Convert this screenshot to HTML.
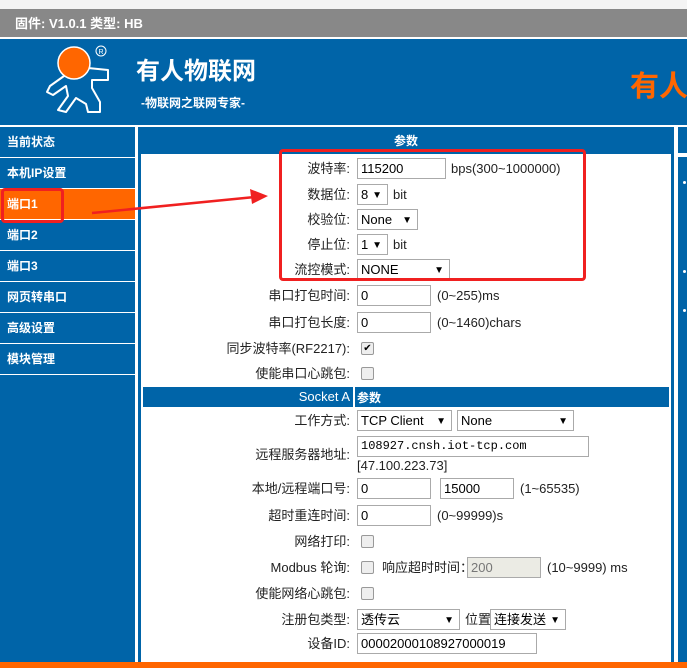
<!DOCTYPE html>
<html><head><meta charset="utf-8"><style>
*{margin:0;padding:0;box-sizing:border-box}
body{width:687px;height:668px;overflow:hidden;background:#fff;font-family:"Liberation Sans","Noto Sans CJK SC",sans-serif;position:relative}
.a{position:absolute}
.side div{position:absolute;left:0;width:135px;height:30px;background:#0064a8;color:#fff;font-size:12px;font-weight:bold;padding:8px 0 0 7px;line-height:14px}
.lbl{position:absolute;right:337px;font-size:13px;line-height:15px;color:#222;text-align:right;white-space:nowrap}
.inp{position:absolute;height:21px;border:1px solid #aaa;background:#fff;font-size:13px;line-height:15px;color:#000;padding:2px 3px;white-space:nowrap}
.sel:after{content:"▼";position:absolute;right:5px;top:3px;font-size:10px}
.t{position:absolute;font-size:13px;line-height:15px;color:#222;white-space:nowrap}
.cb{position:absolute;width:13px;height:13px;border:1px solid #999;border-radius:2px;background:#eee}
</style></head><body>
<div class="a" style="left:0;top:0;width:687px;height:9px;background:#f4f4f4"></div>
<div class="a" style="left:0;top:9px;width:687px;height:28px;background:#888"></div>
<div class="a" style="left:15px;top:16px;color:#fff;font-size:13px;line-height:15px;font-weight:bold">固件: V1.0.1 类型: HB</div>
<div class="a" style="left:0;top:39px;width:687px;height:86px;background:#0064a8"></div>
<svg class="a" style="left:0;top:39px" width="687" height="86">
<path d="M64 37 L50 47 L47 53 L53 56 L66 47 L68 57 L58 71 L66 73 L76 59 L86 65 L88 73 L100 73 L100 63 L92 49 L92 41 L108 41 L108 31 L88 29 Z" fill="none" stroke="#fff" stroke-width="2" stroke-linejoin="round"/>
<circle cx="74" cy="24" r="16" fill="#ff6600" stroke="#fff" stroke-width="1.5"/>
<circle cx="101" cy="12" r="5" fill="none" stroke="#fff" stroke-width="1"/>
<text x="98.5" y="15" fill="#fff" font-size="7" font-family="Liberation Sans">R</text>
</svg>
<div class="a" style="left:136px;top:57px;color:#fff;font-size:24px;line-height:30px;font-weight:bold">有人物联网</div>
<div class="a" style="left:141px;top:96px;color:#fff;font-size:12px;line-height:15px;font-weight:bold">-物联网之联网专家-</div>
<div class="a" style="left:630px;top:70px;color:#ff6600;font-size:29px;line-height:34px;font-weight:bold;white-space:nowrap">有人物</div>
<div class="side">
<div style="top:127px">当前状态</div>
<div style="top:158px">本机IP设置</div>
<div style="top:189px;background:#ff6600">端口1</div>
<div style="top:220px">端口2</div>
<div style="top:251px">端口3</div>
<div style="top:282px">网页转串口</div>
<div style="top:313px">高级设置</div>
<div style="top:344px">模块管理</div>
<div style="top:375px;height:293px"></div>
</div>
<div class="a" style="left:138px;top:127px;width:536px;height:541px;background:#0064a8"></div>
<div class="a" style="left:138px;top:134px;width:536px;text-align:center;color:#fff;font-size:12px;line-height:14px;font-weight:bold">参数</div>
<div class="a" style="left:141px;top:154px;width:530px;height:514px;background:#fff"></div>
<div class="a" style="left:678px;top:127px;width:9px;height:26px;background:#0064a8"></div>
<div class="a" style="left:678px;top:157px;width:9px;height:511px;background:#0064a8"></div>
<div class="a" style="left:683px;top:181px;width:3px;height:3px;background:#fff;border-radius:2px"></div>
<div class="a" style="left:683px;top:270px;width:3px;height:3px;background:#fff;border-radius:2px"></div>
<div class="a" style="left:683px;top:309px;width:3px;height:3px;background:#fff;border-radius:2px"></div>

<div class="lbl" style="top:161px">波特率:</div><div class="inp" style="left:357px;top:158px;width:89px">115200</div><div class="t" style="left:451px;top:161px">bps(300~1000000)</div>
<div class="lbl" style="top:187px">数据位:</div><div class="inp sel" style="left:357px;top:184px;width:31px">8</div><div class="t" style="left:393px;top:187px">bit</div>
<div class="lbl" style="top:212px">校验位:</div><div class="inp sel" style="left:357px;top:209px;width:61px">None</div>
<div class="lbl" style="top:237px">停止位:</div><div class="inp sel" style="left:357px;top:234px;width:31px">1</div><div class="t" style="left:393px;top:237px">bit</div>
<div class="lbl" style="top:262px">流控模式:</div><div class="inp sel" style="left:357px;top:259px;width:93px">NONE</div>
<div class="lbl" style="top:288px">串口打包时间:</div><div class="inp" style="left:357px;top:285px;width:74px">0</div><div class="t" style="left:437px;top:288px">(0~255)ms</div>
<div class="lbl" style="top:315px">串口打包长度:</div><div class="inp" style="left:357px;top:312px;width:74px">0</div><div class="t" style="left:437px;top:315px">(0~1460)chars</div>
<div class="lbl" style="top:341px">同步波特率(RF2217):</div><div class="cb" style="left:361px;top:342px;font-size:10px;line-height:11px;text-align:center">✔</div>
<div class="lbl" style="top:366px">使能串口心跳包:</div><div class="cb" style="left:361px;top:367px"></div>
<div class="a" style="left:143px;top:387px;width:210px;height:20px;background:#0064a8;color:#fff;font-size:13px;line-height:15px;text-align:right;padding:2px 3px 0 0">Socket A</div>
<div class="a" style="left:355px;top:387px;width:314px;height:20px;background:#0064a8;color:#fff;font-size:12px;line-height:14px;font-weight:bold;padding:4px 0 0 2px">参数</div>
<div class="lbl" style="top:413px">工作方式:</div><div class="inp sel" style="left:357px;top:410px;width:95px">TCP Client</div><div class="inp sel" style="left:457px;top:410px;width:117px">None</div>
<div class="lbl" style="top:447px">远程服务器地址:</div><div class="inp" style="left:357px;top:436px;width:232px;font-family:'Liberation Mono',monospace;font-size:12px">108927.cnsh.iot-tcp.com</div>
<div class="t" style="left:357px;top:458px">[47.100.223.73]</div>
<div class="lbl" style="top:481px">本地/远程端口号:</div><div class="inp" style="left:357px;top:478px;width:74px">0</div><div class="inp" style="left:440px;top:478px;width:74px">15000</div><div class="t" style="left:520px;top:481px">(1~65535)</div>
<div class="lbl" style="top:508px">超时重连时间:</div><div class="inp" style="left:357px;top:505px;width:74px">0</div><div class="t" style="left:437px;top:508px">(0~99999)s</div>
<div class="lbl" style="top:534px">网络打印:</div><div class="cb" style="left:361px;top:535px"></div>
<div class="lbl" style="top:560px">Modbus 轮询:</div><div class="cb" style="left:361px;top:561px"></div><div class="t" style="left:382px;top:560px">响应超时时间：</div><div class="inp" style="left:467px;top:557px;width:74px;background:#ebebe4;color:#777">200</div><div class="t" style="left:547px;top:560px">(10~9999) ms</div>
<div class="lbl" style="top:586px">使能网络心跳包:</div><div class="cb" style="left:361px;top:587px"></div>
<div class="lbl" style="top:612px">注册包类型:</div><div class="inp sel" style="left:357px;top:609px;width:103px">透传云</div><div class="t" style="left:465px;top:612px">位置</div><div class="inp sel" style="left:490px;top:609px;width:76px">连接发送</div>
<div class="lbl" style="top:636px">设备ID:</div><div class="inp" style="left:357px;top:633px;width:180px">00002000108927000019</div>
<div class="a" style="left:0;top:662px;width:687px;height:6px;background:#ff6600"></div>

<div class="a" style="left:279px;top:149px;width:307px;height:132px;border:3px solid #f02020;border-radius:4px"></div>
<div class="a" style="left:1px;top:188px;width:63px;height:35px;border:3px solid #f02020;border-radius:4px"></div>
<svg class="a" style="left:0;top:0" width="687" height="668"><line x1="92" y1="213" x2="255" y2="197" stroke="#f02020" stroke-width="2.5"/><polygon points="268,196 250,189 252,204" fill="#f02020"/></svg>
</body></html>
